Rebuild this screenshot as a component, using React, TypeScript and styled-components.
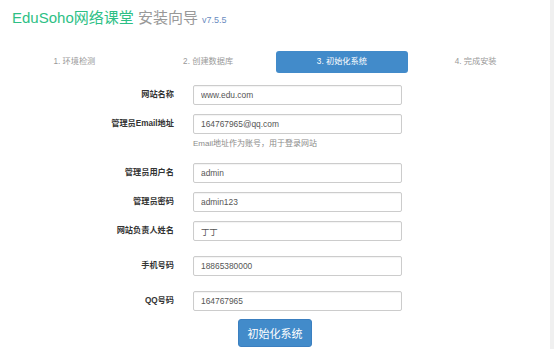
import styled, { createGlobalStyle } from 'styled-components';

const GlobalStyle = createGlobalStyle`
  html, body {
    margin: 0;
    padding: 0;
    background: #fff;
  }
  body {
    font-family: "Liberation Sans", "Noto Sans CJK SC", sans-serif;
    color: #333;
  }
`;

const Page = styled.div`
  width: 534px;
  min-height: 349px;
  padding: 0 8px;
  border-right: 4px solid #f0f0f0;
  box-sizing: content-box;
`;

const Title = styled.h1`
  margin: 0;
  padding: 8px 0 0 4px;
  font-size: 15px;
  line-height: 20px;
  font-weight: normal;
  color: #999;
`;

const Brand = styled.span`
  color: #2dbf85;
`;

const Version = styled.small`
  font-size: 9px;
  color: #6a8cc0;
`;

const Steps = styled.ol`
  margin: 21px 0 0;
  padding: 0;
  list-style: none;
  display: grid;
  grid-template-columns: repeat(4, 1fr);
  gap: 1px;
`;

const Step = styled.li<{ $active?: boolean }>`
  height: 22px;
  line-height: 22px;
  text-align: center;
  font-size: 8.2px;
  border-radius: 3px;
  color: ${({ $active }) => ($active ? '#fff' : '#999')};
  background: ${({ $active }) => ($active ? '#428bca' : 'transparent')};
`;

const Form = styled.form`
  margin-top: 12px;
  display: flex;
  flex-direction: column;
  align-items: stretch;
`;

const Row = styled.div<{ $after: number }>`
  display: grid;
  grid-template-columns: 166px 209px;
  column-gap: 19px;
  margin-bottom: ${({ $after }) => $after}px;
`;

const Label = styled.label`
  height: 20px;
  line-height: 20px;
  text-align: right;
  font-size: 8.2px;
  font-weight: bold;
  color: #333;
`;

const Field = styled.div`
  display: flex;
  flex-direction: column;
`;

const Input = styled.input`
  box-sizing: border-box;
  width: 209px;
  height: 20px;
  padding: 0 7px;
  border: 1px solid #ccc;
  border-radius: 2px;
  font-family: inherit;
  font-size: 8.4px;
  color: #555;
  box-shadow: inset 0 1px 1px rgba(0, 0, 0, 0.05);
  outline: none;
`;

const Help = styled.span`
  margin-top: 3px;
  height: 17px;
  line-height: 14px;
  font-size: 8px;
  color: #8a8a8a;
`;

const Actions = styled.div`
  display: flex;
  justify-content: center;
`;

const Submit = styled.button`
  width: 74px;
  height: 28px;
  border: 1px solid #3b7fc0;
  border-radius: 3px;
  background: #428bca;
  color: #fff;
  font-family: inherit;
  font-size: 11px;
  padding: 0;
`;

const fields = [
  { label: '网站名称', value: 'www.edu.com', after: 9 },
  { label: '管理员Email地址', value: '164767965@qq.com', after: 9, help: 'Email地址作为账号，用于登录网站' },
  { label: '管理员用户名', value: 'admin', after: 9 },
  { label: '管理员密码', value: 'admin123', after: 9 },
  { label: '网站负责人姓名', value: '丁丁', after: 15 },
  { label: '手机号码', value: '18865380000', after: 15 },
  { label: 'QQ号码', value: '164767965', after: 8 },
];

export default function App() {
  return (
    <Page>
      <GlobalStyle />
      <Title>
        <Brand>EduSoho网络课堂</Brand> 安装向导 <Version>v7.5.5</Version>
      </Title>

      <Steps>
        <Step>1. 环境检测</Step>
        <Step>2. 创建数据库</Step>
        <Step $active>3. 初始化系统</Step>
        <Step>4. 完成安装</Step>
      </Steps>

      <Form onSubmit={(e) => e.preventDefault()}>
        {fields.map((f) => (
          <Row key={f.label} $after={f.after}>
            <Label>{f.label}</Label>
            <Field>
              <Input defaultValue={f.value} />
              {f.help && <Help>{f.help}</Help>}
            </Field>
          </Row>
        ))}
        <Actions>
          <Submit type="submit">初始化系统</Submit>
        </Actions>
      </Form>
    </Page>
  );
}
